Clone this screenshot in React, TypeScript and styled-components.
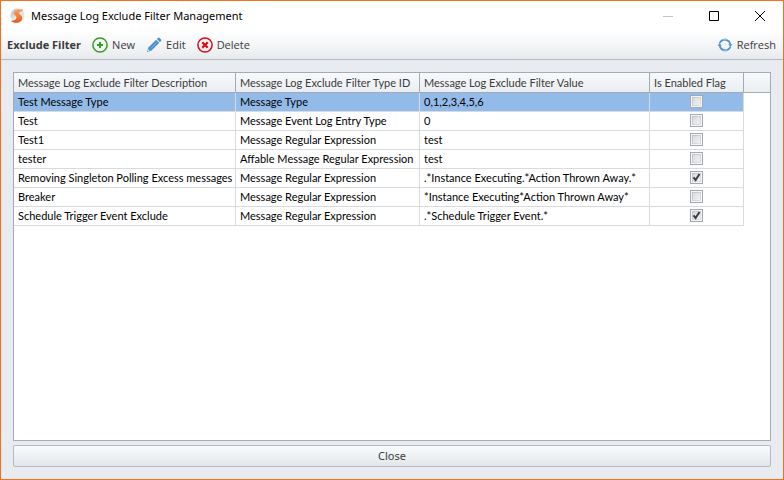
import React, { useState } from "react";
import styled, { createGlobalStyle } from "styled-components";

const GlobalStyle = createGlobalStyle`
  *, *::before, *::after { box-sizing: border-box; }
  body { margin: 0; }
`;

const titleFont = `"Noto Sans", "Open Sans", sans-serif`;
const uiFont = `"Open Sans", "Noto Sans", sans-serif`;
const gridFont = `Lato, "Noto Sans", sans-serif`;

const Window = styled.div`
  display: flex;
  flex-direction: column;
  min-height: 100vh;
  border: 1px solid #f37021;
  background: #e8ebef;
  color: #000;
  font: 11px/16px ${uiFont};
`;

const TitleBar = styled.header`
  display: flex;
  align-items: center;
  height: 30px;
  padding-left: 7px;
  background: #fff;
`;

const Title = styled.h1`
  flex: 1;
  margin: 0 0 0 5px;
  font: 400 11px/16px ${titleFont};
`;

const CaptionButton = styled.button`
  display: grid;
  place-items: center;
  width: 46px;
  height: 28px;
  padding: 0;
  border: 0;
  background: transparent;
  color: #000;

  &:disabled { color: #c4c4c4; }
`;

const Toolbar = styled.div`
  display: flex;
  align-items: center;
  gap: 11px;
  height: 29px;
  padding: 0 7px 0 6px;
  border-bottom: 1px solid #b3b8c1;
  background: linear-gradient(#fff, #e8ebee);
  color: #3b3b3b;
`;

const ToolbarLabel = styled.strong`
  font-weight: 700;
`;

const ToolButton = styled.button<{ $end?: boolean }>`
  display: flex;
  align-items: center;
  gap: 4px;
  margin-left: ${(p) => (p.$end ? "auto" : "0")};
  padding: 0;
  border: 0;
  background: transparent;
  color: inherit;
  font: inherit;
`;

const Content = styled.main`
  flex: 1;
  display: flex;
  flex-direction: column;
  gap: 4px;
  padding: 12px;
`;

const Grid = styled.div`
  flex: 1;
  border: 1px solid #a4abb7;
  background: #fff;
`;

const Table = styled.table`
  width: 100%;
  table-layout: fixed;
  border-collapse: separate;
  border-spacing: 0;
  font: 11px/14px ${gridFont};
`;

const Col = styled.col<{ $width?: number }>`
  width: ${(p) => (p.$width ? `${p.$width}px` : "auto")};
`;

const HeadCell = styled.th`
  height: 20px;
  padding: 0 4px;
  border-right: 1px solid #a4abb7;
  border-bottom: 1px solid #a4abb7;
  background: linear-gradient(#f7f9fb, #ebeef1);
  color: #3b3b3b;
  font-weight: 400;
  text-align: left;
  white-space: nowrap;

  &:last-child { border-right: 0; }
`;

const Row = styled.tr<{ $selected: boolean }>`
  background: ${(p) => (p.$selected ? "#92bbea" : "#fff")};
`;

const Cell = styled.td`
  height: 19px;
  padding: 0 4px;
  border-right: 1px solid #d8dadd;
  border-bottom: 1px solid #d8dadd;
  white-space: nowrap;
`;

const CheckCell = styled(Cell)`
  padding: 2px 0 3px;
`;

const FillerCell = styled.td`
  padding: 0;
  background: #fff;
`;

const CheckBox = styled.label`
  display: grid;
  place-items: center;
  width: 13px;
  height: 13px;
  margin: 0 auto;

  & > * { grid-area: 1 / 1; }
`;

const CheckInput = styled.input`
  appearance: none;
  width: 13px;
  height: 13px;
  margin: 0;
  border: 1px solid #a2a8b5;
  background: linear-gradient(135deg, #dcdcdc, #f0f0f0) content-box, linear-gradient(135deg, #b9bcc1, #e3e5e8) padding-box;
  padding: 2px;
  box-shadow: inset 0 0 0 1px #f5f6f7;
`;

const CheckMark = styled.svg`
  z-index: 1;
  pointer-events: none;
`;

const CloseButton = styled.button`
  height: 22px;
  padding: 0;
  border: 1px solid #b5bac1;
  border-radius: 2px;
  background: linear-gradient(#f7fbfd, #e4e7ea);
  color: #3b3b3b;
  font: 11px/14px ${titleFont};
`;

const Logo = () => (
  <svg width="18" height="16" viewBox="0 0 18 16" aria-hidden="true">
    <defs>
      <linearGradient id="orb" x1="0" y1="0" x2="1" y2="1">
        <stop offset="0" stopColor="#b4b7bb" />
        <stop offset="0.5" stopColor="#e6e7e9" />
        <stop offset="1" stopColor="#dedfe2" />
      </linearGradient>
      <linearGradient id="flame" x1="0" y1="0" x2="0" y2="1">
        <stop offset="0" stopColor="#f9a468" />
        <stop offset="1" stopColor="#e8590f" />
      </linearGradient>
    </defs>
    <circle cx="9.500" cy="7.400" r="7" fill="url(#orb)" />
    <path d="M14.500 1.400C10 0.900 5.800 2.200 5.700 5C5.600 7.400 8.700 7.600 8.600 9.800C8.500 11.700 6 12.700 2.600 13C7 16.200 14 14.900 14.200 9.900C14.300 7.300 11 6.500 11.100 4.900C11.200 3.700 12.800 3.200 15.300 3.200Z" fill="url(#flame)" />
  </svg>
);

const AddIcon = () => (
  <svg width="16" height="16" viewBox="0 0 16 16" fill="none" stroke="#35a01f" aria-hidden="true">
    <circle cx="8" cy="8" r="7.100" strokeWidth="1.500" />
    <path d="M8 5v6M5 8h6" strokeWidth="2" />
  </svg>
);

const EditIcon = () => (
  <svg width="16" height="16" viewBox="0 0 16 16" aria-hidden="true">
    <path d="M0.800 15.200L2.400 10.400L10.200 2.700L13.300 5.800L5.500 13.500Z" fill="#4a8fd0" />
    <path d="M10.900 2L12.200 0.800Q12.900 0.300 13.500 0.900L15.100 2.500Q15.600 3.100 15.100 3.800L13.900 5.100Z" fill="#4a8fd0" />
    <path d="M4.400 11.700L11.400 4.700" stroke="#7fb2e2" strokeWidth="0.900" />
    <path d="M2.100 12.200L3.800 13.900L1.900 14.400L1.600 14.100Z" fill="#e8f1fa" />
  </svg>
);

const DeleteIcon = () => (
  <svg width="16" height="16" viewBox="0 0 16 16" fill="none" stroke="#e00b12" aria-hidden="true">
    <circle cx="8" cy="8" r="7.100" strokeWidth="1.500" />
    <path d="M5.300 5.300L10.700 10.700M10.700 5.300L5.300 10.700" strokeWidth="2.300" />
  </svg>
);

const RefreshIcon = () => (
  <svg width="16" height="16" viewBox="0 0 16 16" fill="none" stroke="#4a92ce" strokeWidth="1.700" aria-hidden="true">
    <path d="M2.500 6.500A5.600 5.600 0 0 1 13.300 7.500" />
    <path d="M13.500 9.500A5.600 5.600 0 0 1 2.700 8.500" />
    <path d="M11.200 7.300H15.600L13.400 9.800ZM4.800 8.700H0.400L2.600 6.200Z" fill="#4a92ce" stroke="none" />
    <path d="M5.800 2.800A5.600 5.600 0 0 1 9.600 2.600M10.200 13.200A5.600 5.600 0 0 1 6.400 13.400" stroke="#8dbde4" />
  </svg>
);

const columns = [
  { title: "Message Log Exclude Filter Description", width: 222 },
  { title: "Message Log Exclude Filter Type ID", width: 184 },
  { title: "Message Log Exclude Filter Value", width: 230 },
  { title: "Is Enabled Flag", width: 94 },
];

const initialFilters = [
  { description: "Test Message Type", type: "Message Type", value: "0,1,2,3,4,5,6", enabled: false },
  { description: "Test", type: "Message Event Log Entry Type", value: "0", enabled: false },
  { description: "Test1", type: "Message Regular Expression", value: "test", enabled: false },
  { description: "tester", type: "Affable Message Regular Expression", value: "test", enabled: false },
  { description: "Removing Singleton Polling Excess messages", type: "Message Regular Expression", value: ".*Instance Executing.*Action Thrown Away.*", enabled: true },
  { description: "Breaker", type: "Message Regular Expression", value: "*Instance Executing*Action Thrown Away*", enabled: false },
  { description: "Schedule Trigger Event Exclude", type: "Message Regular Expression", value: ".*Schedule Trigger Event.*", enabled: true },
];

export default function App() {
  const [filters, setFilters] = useState(initialFilters);
  const [selected, setSelected] = useState(0);

  const toggle = (index: number) =>
    setFilters(filters.map((f, i) => (i === index ? { ...f, enabled: !f.enabled } : f)));

  return (
    <Window>
      <GlobalStyle />
      <TitleBar>
        <Logo />
        <Title>Message Log Exclude Filter Management</Title>
        <CaptionButton aria-label="Minimize" disabled>
          <svg width="10" height="10" stroke="currentColor"><path d="M0 5.500H10" /></svg>
        </CaptionButton>
        <CaptionButton aria-label="Maximize">
          <svg width="10" height="10" fill="none" stroke="currentColor"><path d="M.5 .5H9.500V9.500H.5Z" /></svg>
        </CaptionButton>
        <CaptionButton aria-label="Close window">
          <svg width="10" height="10" stroke="currentColor"><path d="M0 0L10 10M10 0L0 10" /></svg>
        </CaptionButton>
      </TitleBar>

      <Toolbar>
        <ToolbarLabel>Exclude Filter</ToolbarLabel>
        <ToolButton><AddIcon />New</ToolButton>
        <ToolButton><EditIcon />Edit</ToolButton>
        <ToolButton><DeleteIcon />Delete</ToolButton>
        <ToolButton $end><RefreshIcon />Refresh</ToolButton>
      </Toolbar>

      <Content>
        <Grid>
          <Table>
            <colgroup>
              {columns.map((c) => <Col key={c.title} $width={c.width} />)}
              <Col />
            </colgroup>
            <thead>
              <tr>
                {columns.map((c) => <HeadCell key={c.title} scope="col">{c.title}</HeadCell>)}
                <HeadCell as="td" />
              </tr>
            </thead>
            <tbody>
              {filters.map((f, i) => (
                <Row key={f.description} $selected={i === selected} onClick={() => setSelected(i)}>
                  <Cell>{f.description}</Cell>
                  <Cell>{f.type}</Cell>
                  <Cell>{f.value}</Cell>
                  <CheckCell>
                    <CheckBox>
                      <CheckInput
                        type="checkbox"
                        aria-label={`${f.description} enabled`}
                        checked={f.enabled}
                        onChange={() => toggle(i)}
                      />
                      {f.enabled && (
                        <CheckMark width="9" height="9" viewBox="0 0 9 9" aria-hidden="true">
                          <path d="M1.500 4.300L3.600 7L7.500 1" fill="none" stroke="#3a3d42" strokeWidth="2" />
                        </CheckMark>
                      )}
                    </CheckBox>
                  </CheckCell>
                  <FillerCell />
                </Row>
              ))}
            </tbody>
          </Table>
        </Grid>
        <CloseButton>Close</CloseButton>
      </Content>
    </Window>
  );
}
